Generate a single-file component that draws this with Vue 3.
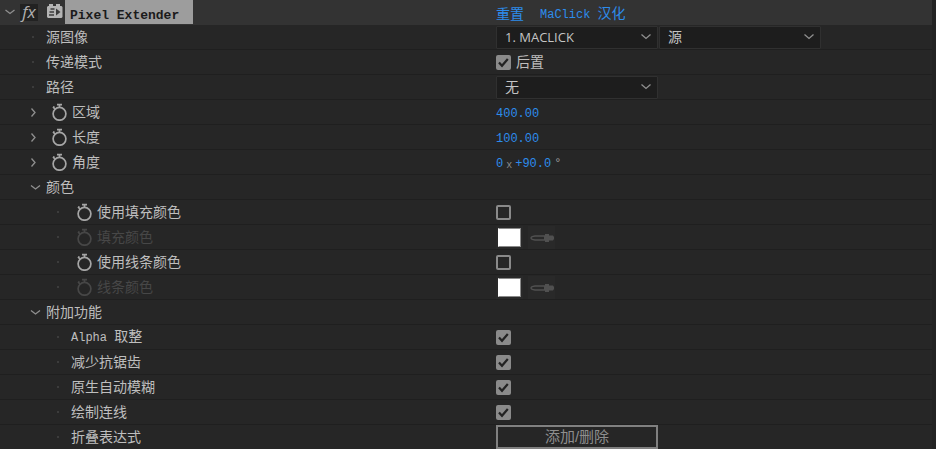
<script setup>
import { reactive } from 'vue'

const rows = reactive([
  { id: 'source', label: '源图像', marker: 'dot', level: 0, kind: 'source' },
  { id: 'mode', label: '传递模式', marker: 'dot', level: 0, kind: 'check', checked: true, text: '后置' },
  { id: 'path', label: '路径', marker: 'dot', level: 0, kind: 'path' },
  { id: 'area', label: '区域', marker: 'right', level: 0, watch: true, kind: 'number', value: '400.00' },
  { id: 'length', label: '长度', marker: 'right', level: 0, watch: true, kind: 'number', value: '100.00' },
  { id: 'angle', label: '角度', marker: 'right', level: 0, watch: true, kind: 'angle' },
  { id: 'color', label: '颜色', marker: 'down', level: 0, kind: 'group' },
  { id: 'use-fill', label: '使用填充颜色', marker: 'dot', level: 1, watch: true, kind: 'check', checked: false },
  { id: 'fill', label: '填充颜色', marker: 'dot', level: 1, watch: true, disabled: true, kind: 'color' },
  { id: 'use-line', label: '使用线条颜色', marker: 'dot', level: 1, watch: true, kind: 'check', checked: false },
  { id: 'line', label: '线条颜色', marker: 'dot', level: 1, watch: true, disabled: true, kind: 'color' },
  { id: 'extra', label: '附加功能', marker: 'down', level: 0, kind: 'group' },
  { id: 'alpha', latin: 'Alpha ', label: '取整', marker: 'dot', level: 1, kind: 'check', checked: true },
  { id: 'alias', label: '减少抗锯齿', marker: 'dot', level: 1, kind: 'check', checked: true },
  { id: 'blur', label: '原生自动模糊', marker: 'dot', level: 1, kind: 'check', checked: true },
  { id: 'connect', label: '绘制连线', marker: 'dot', level: 1, kind: 'check', checked: true },
  { id: 'fold', label: '折叠表达式', marker: 'dot', level: 1, kind: 'button' }
])
</script>

<template>
  <main class="panel">
    <header class="row head">
      <div class="name">
        <svg class="twirl" width="12" height="8" viewBox="0 0 12 8"><path d="M1.5 2 6 5.5 10.5 2" /></svg>
        <span class="fx">fx</span>
        <svg class="plugin" width="16" height="15" viewBox="0 0 16 15">
          <path class="body" d="M1 2H2V0H6V2H9V0H13V2H14.5L15.5 3V13L14.5 14H1L0 13V3Z" />
          <path class="ink" d="M3.5 5H7.5M2.5 8H7M2 11H7" />
          <path class="hole" d="M9 4.5V11.5L13.5 8Z" />
        </svg>
        <h1 class="title">Pixel Extender</h1>
      </div>
      <div class="value links">
        <a href="#reset">重置</a>
        <a href="#about"><span class="mono">MaClick </span>汉化</a>
      </div>
    </header>

    <div v-for="row in rows" :key="row.id" class="row" :class="{ off: row.disabled }">
      <div class="name prop" :class="{ nested: row.level === 1 }">
        <svg class="marker" width="16" height="16" viewBox="0 0 16 16">
          <rect v-if="row.marker === 'dot'" class="dot" x="6" y="7" width="2" height="2" />
          <path v-else-if="row.marker === 'right'" d="M5.5 4.5 9 8.5 5.5 12.5" />
          <path v-else d="M5 6.5 9.5 10 14 6.5" />
        </svg>
        <svg v-if="row.watch" class="watch" width="16" height="18" viewBox="0 0 16 18">
          <circle cx="7.5" cy="10.8" r="6.4" />
          <path d="M5 1.7H10M7.5 1.5V4.5M1 4 3.2 6.2M1 4H2.6" />
        </svg>
        <label :for="row.id"><span v-if="row.latin" class="mono">{{ row.latin }}</span>{{ row.label }}</label>
      </div>

      <div class="value">
        <template v-if="row.kind === 'source'">
          <span class="drop">
            <select :id="row.id" class="sans"><option>1. MACLICK</option></select>
            <svg width="12" height="8" viewBox="0 0 12 8"><path d="M1.5 1.5 6 5.5 10.5 1.5" /></svg>
          </span>
          <span class="drop">
            <select aria-label="源"><option>源</option></select>
            <svg width="12" height="8" viewBox="0 0 12 8"><path d="M1.5 1.5 6 5.5 10.5 1.5" /></svg>
          </span>
        </template>
        <span v-else-if="row.kind === 'path'" class="drop">
          <select :id="row.id"><option>无</option></select>
          <svg width="12" height="8" viewBox="0 0 12 8"><path d="M1.5 1.5 6 5.5 10.5 1.5" /></svg>
        </span>
        <label v-else-if="row.kind === 'check'" class="tick">
          <input :id="row.id" v-model="row.checked" type="checkbox">
          <svg v-if="row.checked" width="15" height="15" viewBox="0 0 15 15"><path d="M3 7.5 6 10.8 11.8 4" /></svg>
          <span v-if="row.text">{{ row.text }}</span>
        </label>
        <button v-else-if="row.kind === 'number'" :id="row.id" class="num mono">{{ row.value }}</button>
        <span v-else-if="row.kind === 'angle'" class="angle mono">
          <button :id="row.id" class="num mono">0</button>
          <span class="times">x</span>
          <button class="num mono" aria-label="角度">+90.0</button>
          <span class="deg">°</span>
        </span>
        <template v-else-if="row.kind === 'color'">
          <button :id="row.id" class="swatch" disabled><span></span></button>
          <button class="dropper" aria-label="吸管" disabled>
            <svg width="24" height="10" viewBox="0 0 24 10">
              <path class="tube" d="M15 3H5Q1 3.5 1 5T5 7H15" />
              <path class="bulb" d="M14 3H15V1H19V2.5H23L24 4V6L23 7.5H19V9H15V7H14Z" />
            </svg>
          </button>
        </template>
        <button v-else-if="row.kind === 'button'" :id="row.id" class="edit">添加/删除</button>
      </div>
    </div>
  </main>
</template>

<style>
body {
  background: #232323;
  overflow: hidden;
}
</style>

<style scoped>
.panel {
  margin-right: 4px;
  background: #262626;
  color: #bebebe;
  font: 14px/20px "Liberation Sans", "Noto Sans CJK SC", sans-serif;
}

.row {
  display: grid;
  grid-template-columns: 496px 1fr;
  grid-template-rows: 100%;
  box-sizing: border-box;
  height: 25px;
  border-bottom: 1px solid #1f1f1f;
}

.head {
  background: #333333;
  border-color: #333333;
}

.name,
.value {
  display: flex;
  align-items: center;
  min-width: 0;
  white-space: nowrap;
}

svg {
  flex: none;
  fill: none;
  stroke: #909090;
  stroke-width: 1.3;
}

.mono {
  font-family: "Liberation Mono", monospace;
  font-size: 12px;
  white-space: pre;
}

.head .name {
  padding-left: 4px;
}

.fx {
  width: 18px;
  height: 17px;
  margin: 0 9px 0 4px;
  background: #222222;
  color: #b0b0b0;
  font: italic 17px/15px "Open Sans", sans-serif;
  text-align: center;
}

.plugin {
  margin-bottom: 2px;
}

.plugin .body {
  fill: #b4b4b4;
  stroke: none;
}

.plugin .ink {
  stroke: #3c3c3c;
}

.plugin .hole {
  fill: #3c3c3c;
  stroke: none;
}

.title {
  align-self: stretch;
  box-sizing: border-box;
  width: 128px;
  margin: 0 0 0 2px;
  padding: 7px 5px 0;
  background: #9d9d9d;
  color: #1b1b1b;
  font: bold 13px/17px "Liberation Mono", monospace;
}

.links {
  gap: 16px;
  padding-top: 4px;
}

a {
  color: #2d8ceb;
  text-decoration: none;
}

.prop {
  padding-left: 26px;
}

.nested {
  padding-left: 51px;
}

.marker {
  margin-right: 4px;
}

.marker .dot {
  fill: #3c3c3c;
  stroke: none;
}

.watch {
  margin: 0 4px 0 6px;
  stroke: #a6a6a6;
  stroke-width: 1.7;
}

.off .name {
  color: #474747;
}

.off .watch {
  stroke: #474747;
}

.drop {
  position: relative;
  width: 162px;
  height: 23px;
  margin-right: 1px;
}

.drop select {
  appearance: none;
  box-sizing: border-box;
  width: 100%;
  height: 100%;
  margin: 0;
  padding: 0 24px 0 8px;
  border: 1px solid #303030;
  border-radius: 1px;
  background: #1d1d1d;
  color: #c4c4c4;
  font: inherit;
}

.drop select.sans {
  font: 13px/20px "Open Sans", sans-serif;
}

.drop svg {
  position: absolute;
  top: 7px;
  right: 6px;
  pointer-events: none;
}

.tick {
  position: relative;
  display: flex;
  align-items: center;
  gap: 5px;
}

.tick input {
  appearance: none;
  box-sizing: border-box;
  width: 15px;
  height: 15px;
  margin: 0;
  border: 2px solid #8a8a8a;
  border-radius: 2px;
}

.tick input:checked {
  background: #8a8a8a;
}

.tick svg {
  position: absolute;
  left: 0;
  stroke: #222222;
  stroke-width: 2.2;
  pointer-events: none;
}

button {
  margin: 0;
  padding: 0;
  border: 0;
  background: none;
  font-size: 14px;
}

.num {
  padding-top: 3px;
  color: #2d8ceb;
  font-size: 12px;
}

.angle {
  display: flex;
  align-items: center;
  gap: 3px;
  line-height: 14px;
}

.times {
  padding-top: 8px;
  color: #8c8c8c;
  font-size: 10px;
}

.deg {
  padding-top: 3px;
  color: #a0a0a0;
}

.swatch,
.dropper {
  display: flex;
  align-items: center;
  justify-content: center;
  width: 27px;
  height: 23px;
  background: #292929;
}

.swatch span {
  box-sizing: border-box;
  width: 23px;
  height: 19px;
  border: 1px solid #8a8a8a;
  border-left-color: #ffffff;
  background: #ffffff;
}

.dropper {
  margin-left: 5px;
}

.dropper svg {
  margin-top: 2px;
}

.tube {
  stroke: #505050;
}

.bulb {
  fill: #505050;
  stroke: none;
}

.edit {
  box-sizing: border-box;
  width: 162px;
  height: 24px;
  border: 2px solid #808080;
  color: #8e8e8e;
  font-family: inherit;
  font-size: 15px;
  line-height: 20px;
}
</style>
